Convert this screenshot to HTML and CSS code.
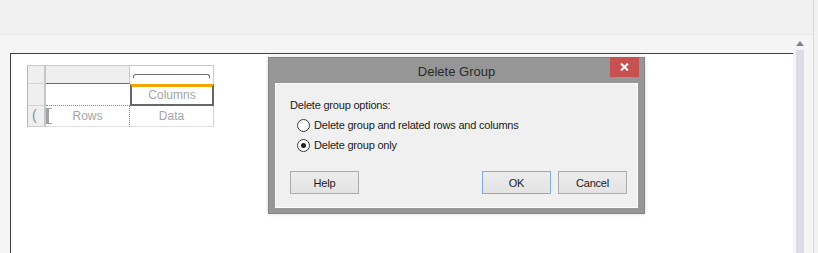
FILE: index.html
```html
<!DOCTYPE html>
<html lang="en">
<head>
    <meta charset="UTF-8">
    <title>Delete Group</title>
    <link rel="stylesheet" href="styles.css">
</head>
<body>

    <div class="app">
        <div class="main">
            <div class="toolbar"></div>
            <div class="workspace">
                <div class="canvas">
                    <!-- tablix in design mode -->
                    <div class="tablix">
                        <div class="rh"></div>
                        <div class="ch"></div>
                        <div class="ch ch-last"><div class="group-line"></div></div>

                        <div class="rh"></div>
                        <div class="cell cell-empty"></div>
                        <div class="cell cell-selected">Columns</div>

                        <div class="rh rh-last">(</div>
                        <div class="cell cell-rows">Rows</div>
                        <div class="cell cell-data">Data</div>
                    </div>
                </div>
                <div class="vscroll">
                    <svg class="arrow" width="8" height="5" viewBox="0 0 8 5"><path d="M4 0 L8 5 L0 5 Z" fill="#7e7e8e"/></svg>
                    <div class="track"></div>
                </div>
            </div>
        </div>
        <div class="edge"></div>
    </div>

    <!-- Delete Group dialog -->
    <div class="dialog">
        <div class="dialog-title">
            Delete Group
            <div class="close-btn">
                <svg width="9" height="8" viewBox="0 0 9 8"><path d="M1 0.5 L8 7.5 M8 0.5 L1 7.5" stroke="#fff" stroke-width="2"/></svg>
            </div>
        </div>
        <div class="dialog-body">
            <div class="label">Delete group options:</div>
            <div class="options">
                <div class="option"><span class="radio"></span>Delete group and related rows and columns</div>
                <div class="option"><span class="radio checked"></span>Delete group only</div>
            </div>
            <div class="buttons">
                <button class="btn">Help</button>
                <div class="spacer"></div>
                <button class="btn btn-default">OK</button>
                <button class="btn">Cancel</button>
            </div>
        </div>
    </div>

</body>
</html>
```

FILE: styles.css
```css
body {
    margin: 0;
    padding: 0;
    width: 818px;
    height: 253px;
    overflow: hidden;
    font-family: "Liberation Sans", Arial, sans-serif;
    background-color: #f0f0f0;
    position: relative;
}
.app {
    display: flex;
    height: 253px;
}
.main {
    width: 813px;
    display: flex;
    flex-direction: column;
}
.edge {
    width: 4px;
    border-left: 1px solid #d8d8d8;
    background: #f2f2f2;
}
.toolbar {
    height: 34px;
    background: #f0f0f0;
    border-bottom: 1px solid #ebebeb;
}
.workspace {
    flex: 1;
    display: flex;
    background: #f5f5f5;
    padding: 18px 0 0 10px;
}
.canvas {
    width: 783px;
    box-sizing: border-box;
    background: #fff;
    border-top: 1px solid #404040;
    border-left: 1px solid #404040;
    padding: 11px 0 0 16px;
}
.vscroll {
    width: 8px;
    margin-left: 3px;
    margin-top: -12px;
    display: flex;
    flex-direction: column;
}
.vscroll .arrow {
    display: block;
}
.vscroll .track {
    flex: 1;
    margin-top: 4px;
    background: #dcdce4;
}

/* tablix */
.tablix {
    display: grid;
    grid-template-columns: 18px 84px 84px;
    grid-template-rows: 18px 22px 21px;
    width: 186px;
    border-top: 1px solid #cacaca;
    border-left: 1px solid #b4b4b4;
    font-size: 12px;
    color: #a4a4a4;
}
.tablix > div {
    box-sizing: border-box;
}
.rh {
    background: #efefef;
    border-right: 2px solid #c6c6c6;
    border-bottom: 1px solid #d4d4d4;
    color: #8c8c8c;
    font-size: 14px;
    padding-left: 4px;
    line-height: 19px;
}
.rh-last {
    border-bottom: 1px solid #cfcfcf;
}
.ch {
    background: #efefef;
    border-right: 1px solid #cacaca;
    border-bottom: 1px solid #6a6a6a;
}
.ch-last {
    background: #fff;
    border-bottom: none;
    border-right: 1px solid #cacaca;
    padding: 8px 3px 0 3px;
}
.group-line {
    height: 3px;
    border: 1px solid #6e6e6e;
    border-bottom: none;
    border-radius: 3px 3px 0 0;
}
.cell {
    text-align: center;
    line-height: 20px;
}
.cell-empty {
    border-bottom: 1px dotted #8a8a8a;
}
.cell-selected {
    border: 2px solid #676767;
    border-top: 3px solid #f3a600;
    line-height: 16px;
}
.cell-rows {
    position: relative;
    border-right: 1px dotted #8a8a8a;
    border-bottom: 1px solid #dedede;
}
.cell-rows::before {
    content: "";
    position: absolute;
    left: 0;
    top: 2px;
    bottom: 2px;
    width: 3px;
    border-left: 3px solid #a2a2a2;
    border-top: 1px solid #a2a2a2;
    border-bottom: 1px solid #a2a2a2;
}
.cell-data {
    border-right: 1px solid #d4d4d4;
    border-bottom: 1px solid #dedede;
}

/* dialog */
.dialog {
    position: absolute;
    left: 268px;
    top: 57px;
    width: 377px;
    height: 157px;
    box-sizing: border-box;
    background: #969696;
    border: 1px solid #838383;
    padding: 0 6px 5px 6px;
    display: flex;
    flex-direction: column;
    box-shadow: 0 0 4px rgba(0, 0, 0, 0.15);
}
.dialog-title {
    position: relative;
    height: 25px;
    padding-top: 2px;
    box-sizing: border-box;
    display: flex;
    align-items: center;
    justify-content: center;
    font-size: 13px;
    color: #2a2a2a;
}
.close-btn {
    position: absolute;
    top: -1px;
    right: -1px;
    width: 29px;
    height: 20px;
    background: #c75050;
    display: flex;
    align-items: center;
    justify-content: center;
}
.close-btn svg {
    display: block;
}
.dialog-body {
    flex: 1;
    background: #f0f0f0;
    border: 1px solid #fafafa;
    padding: 14px 10px 0 14px;
    font-size: 11px;
    letter-spacing: -0.2px;
    color: #1a1a1a;
    display: flex;
    flex-direction: column;
}
.label {
    line-height: 15px;
}
.options {
    margin-top: 2px;
    padding-left: 7px;
}
.option {
    height: 20px;
    display: flex;
    align-items: center;
}
.radio {
    width: 13px;
    height: 13px;
    box-sizing: border-box;
    border: 1px solid #3a3a3a;
    border-radius: 50%;
    background: #fff;
    margin-right: 4px;
    display: flex;
    align-items: center;
    justify-content: center;
}
.radio.checked::after {
    content: "";
    width: 5px;
    height: 5px;
    border-radius: 50%;
    background: #1e1e1e;
}
.buttons {
    display: flex;
    gap: 7px;
    margin-top: 16px;
}
.spacer {
    flex: 1;
}
.btn {
    width: 69px;
    height: 23px;
    box-sizing: border-box;
    background: linear-gradient(#ececec, #e3e3e3);
    border: 1px solid #acacac;
    font-family: "Liberation Sans", Arial, sans-serif;
    font-size: 11px;
    letter-spacing: -0.2px;
    color: #1a1a1a;
    padding: 0;
}
.btn-default {
    border-color: #7aaee0;
}
```
